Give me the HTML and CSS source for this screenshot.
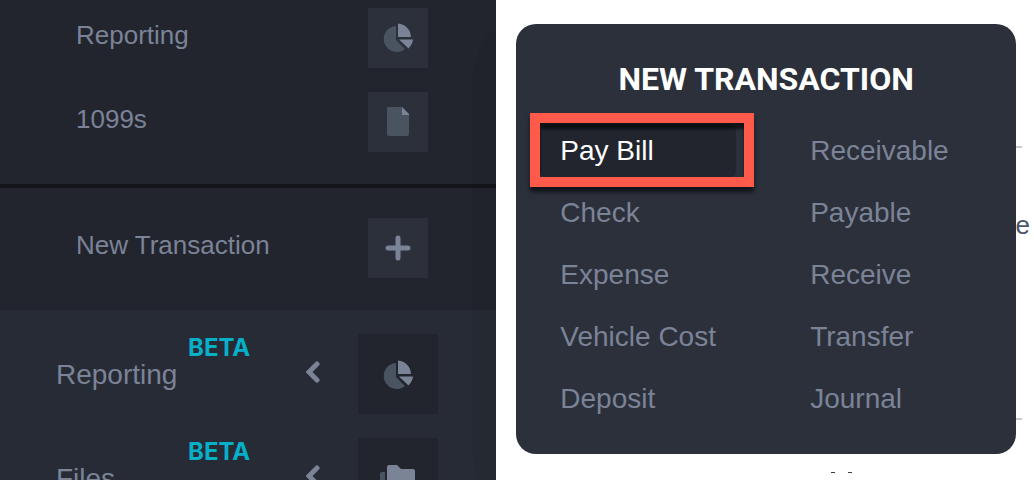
FILE: index.html
```html
<!DOCTYPE html>
<html lang="en">
<head>
    <meta charset="UTF-8">
    <meta name="viewport" content="width=device-width">
    <title>New Transaction</title>
    <link rel="stylesheet" href="styles.css">
</head>
<body>
<nav class="sidebar">
    <div class="submenu">
        <a class="sub-item" href="#">
            <span>Reporting</span>
            <span class="tile">
                <svg class="icon" viewBox="2 0 32 32">
                    <path class="dim" d="M16 4v14l9 9A13 13 0 1 1 16 4z"/>
                    <path d="M18 1.500a14 14 0 0 1 13 13.500H18zM19 17.500h14q-.6 5-4.500 9z"/>
                </svg>
            </span>
        </a>
        <a class="sub-item" href="#">
            <span>1099s</span>
            <span class="tile">
                <svg class="icon" viewBox="1 0 32 32">
                    <path class="dim" d="M7 1h14v8h7v19q0 2-2 2H8q-2 0-2-2V2q0-1 1-1z"/>
                    <path d="M21 1l7 7v1h-7z"/>
                </svg>
            </span>
        </a>
    </div>
    <div class="submenu divided">
        <a class="sub-item" href="#">
            <span>New Transaction</span>
            <span class="tile">
                <svg class="icon" viewBox="0 0 32 32">
                    <path class="plus" d="M16 6v20M6 16h20"/>
                </svg>
            </span>
        </a>
    </div>
    <div class="menu">
        <a class="menu-item" href="#">
            <span class="label">Reporting</span>
            <span class="beta">BETA</span>
            <svg class="chevron" viewBox="0 0 16 24"><path d="M11 4L3 12l8 8"/></svg>
            <span class="tile large">
                <svg class="icon" viewBox="2 -1 32 32">
                    <path class="dim" d="M16 4v14l9 9A13 13 0 1 1 16 4z"/>
                    <path d="M18 1.500a14 14 0 0 1 13 13.500H18zM19 17.500h14q-.6 5-4.500 9z"/>
                </svg>
            </span>
        </a>
        <a class="menu-item" href="#">
            <span class="label">Files</span>
            <span class="beta">BETA</span>
            <svg class="chevron" viewBox="0 0 16 24"><path d="M11 4L3 12l8 8"/></svg>
            <span class="tile large">
                <svg class="icon wide" viewBox="0 -2 40 32">
                    <path class="dim" d="M4 8h3v16q0 2 2 2h20v3q0 2-2 2H4q-2 0-2-2V10q0-2 2-2z"/>
                    <path d="M11 1h8l4 4h12q2 0 2 2v15q0 2-2 2H11q-2 0-2-2V3q0-2 2-2z"/>
                </svg>
            </span>
        </a>
    </div>
</nav>
<main class="content">
    <div class="page">
        <section class="field"><span>e</span></section>
        <div class="marks"><i></i><i></i></div>
    </div>
    <section class="popup">
        <h1>NEW TRANSACTION</h1>
        <div class="links">
            <a class="active" href="#">Pay Bill</a>
            <a href="#">Receivable</a>
            <a href="#">Check</a>
            <a href="#">Payable</a>
            <a href="#">Expense</a>
            <a href="#">Receive</a>
            <a href="#">Vehicle Cost</a>
            <a href="#">Transfer</a>
            <a href="#">Deposit</a>
            <a href="#">Journal</a>
        </div>
        <div class="highlight"></div>
    </section>
</main>
</body>
</html>
```

FILE: styles.css
```css
* {
    box-sizing: border-box;
}

body {
    display: flex;
    height: 100vh;
    margin: 0;
    overflow: hidden;
    background: #fff;
    color: #7b8397;
    font-family: "Liberation Sans", Arial, sans-serif;
}

a {
    color: inherit;
    text-decoration: none;
}

/* sidebar */

.sidebar {
    position: relative;
    flex: 0 0 48%;
    overflow: hidden;
    background: #272b35;
}

/* soft shade along the right edge */
.sidebar::after {
    content: "";
    position: absolute;
    top: 32px;
    right: 0;
    bottom: -20px;
    width: 24px;
    border-radius: 24px 0 0 24px / 60px 0 0 60px;
    background: rgba(0, 0, 0, 0.04);
}

.submenu {
    display: flex;
    flex-direction: column;
    gap: 24px;
    padding: 8px 68px 32px 76px;
    background: #22252e;
}

.divided {
    padding-top: 30px;
    border-top: 4px solid #14151b;
}

.sub-item {
    display: flex;
    align-items: center;
    justify-content: space-between;
    font-size: 26px;
    line-height: 32px;
}

.sub-item > span:first-child {
    padding-bottom: 6px;
}

.tile {
    display: flex;
    align-items: center;
    justify-content: center;
    width: 60px;
    height: 60px;
    background: #2c303b;
}

.large {
    width: 80px;
    height: 80px;
    background: #22252e;
}

.icon {
    width: 32px;
    height: 32px;
    overflow: visible;
    fill: #7b8397;
}

.wide {
    width: 40px;
}

.dim {
    fill: #4a5461;
}

.plus,
.chevron {
    fill: none;
    stroke: #7b8397;
    stroke-width: 5;
    stroke-linecap: round;
}

.menu {
    display: flex;
    flex-direction: column;
    gap: 24px;
    padding: 24px 58px 0 56px;
}

.menu-item {
    display: flex;
    font-size: 28px;
    line-height: 32px;
}

.label {
    width: 132px;
    padding-top: 25px;
}

.beta {
    color: #06b0c8;
    font-family: Inter, sans-serif;
    font-size: 24px;
    font-weight: 700;
    line-height: 28px;
}

.chevron {
    width: 16px;
    height: 24px;
    margin: 26px 36px 0 auto;
}

/* page behind the popup */

.content {
    position: relative;
    flex: 1;
    padding: 24px 18px 0 20px;
}

.page {
    position: absolute;
    inset: 146px 4px 0 20px;
}

.field {
    display: flex;
    align-items: center;
    justify-content: flex-end;
    height: 274px;
    padding-bottom: 116px;
    color: #4a5568;
    font-size: 26px;
}

.field::before {
    content: "";
    position: absolute;
    top: 0;
    right: 8px;
    left: 0;
    height: 270px;
    border: solid #ccc;
    border-width: 2px 0;
}

.marks {
    display: flex;
    gap: 13px;
    justify-content: center;
    margin-top: 52px;
    padding-left: 137px;
}

.marks i {
    width: 4px;
    height: 1px;
    background: #3b3b4c;
}

/* popup */

.popup {
    position: relative;
    padding: 36px 30px 29px 24px;
    border-radius: 20px;
    background: #2c303b;
}

h1 {
    margin: 0 -6px 27px 0;
    color: #fff;
    font-family: Roboto, sans-serif;
    font-size: 32px;
    font-weight: 700;
    line-height: 38px;
    text-align: center;
}

.links {
    display: grid;
    grid-template-columns: 1fr 1fr;
    gap: 10px 54px;
}

.links a {
    padding: 10px 20px;
    border-radius: 6px;
    font-size: 28px;
    line-height: 32px;
}

.links .active {
    background: #22252e;
    color: #fff;
}

/* marker drawn over the active link */
.highlight {
    position: absolute;
    top: 89px;
    left: 14px;
    width: 224px;
    height: 74px;
    border: 10px solid #ff5a4a;
    box-shadow: 0 5px 4px rgba(0, 0, 0, 0.6), inset 0 6px 3px rgba(0, 0, 0, 0.6);
}
```
